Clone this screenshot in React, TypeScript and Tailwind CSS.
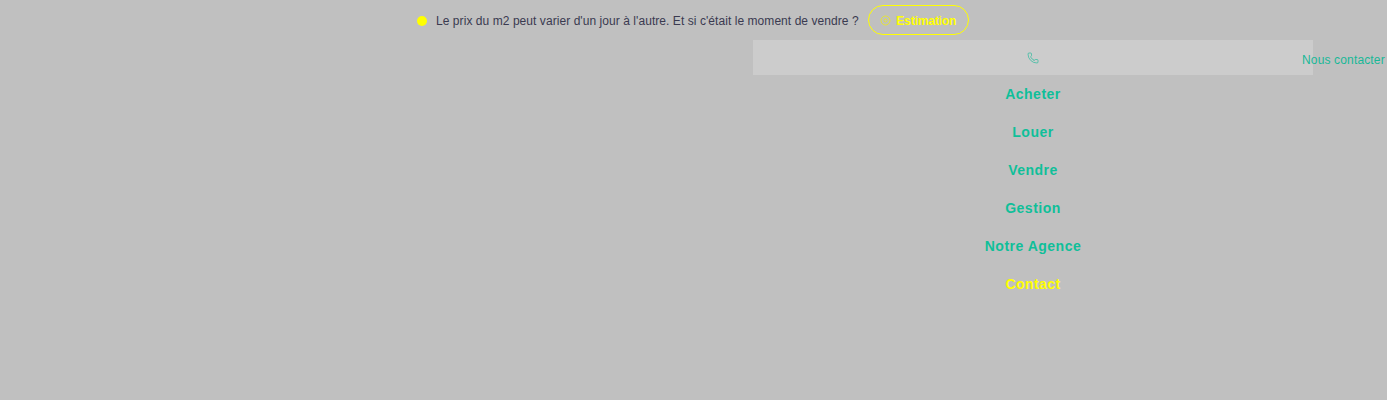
import React from "react";
import { Phone } from "lucide-react";

const NAV_ITEMS = ["Acheter", "Louer", "Vendre", "Gestion", "Notre Agence"];

export default function App() {
  return (
    <div className="h-[400px] w-[1387px] overflow-hidden bg-[#c0c0c0] font-['Liberation_Sans',Arial,sans-serif]">
      <div className="flex h-10 items-center pl-[417px]">
        <span className="mt-[1px] h-2.5 w-2.5 rounded-full bg-[#ffff00]" />
        <p className="ml-[9px] mt-[1px] whitespace-nowrap text-xs tracking-[0.06px] text-[#3a3a50]">
          Le prix du m2 peut varier d'un jour à l'autre. Et si c'était le moment de vendre ?
        </p>
        <a className="ml-[9px] flex h-[30px] w-[101px] items-center justify-center gap-[5px] rounded-full border border-[#ffff00] pt-[1px] text-xs font-bold tracking-[-0.15px] text-[#ffff00]">
          <svg className="shrink-0" width="11" height="11" viewBox="0 0 11 11" fill="none" stroke="#e6e632" strokeWidth="1">
            <circle cx="5.5" cy="5.5" r="4.5" />
            <circle cx="5.5" cy="5.5" r="1.5" />
          </svg>
          Estimation
        </a>
      </div>

      <div className="ml-[753px] w-[560px]">
        <div className="flex h-[35px] items-center bg-[#cccccc] pl-[274px] text-[#17b897]">
          <Phone className="mt-[1px] h-3 w-3 shrink-0" strokeWidth={1.25} />
          <span className="ml-[263px] mt-[4px] whitespace-nowrap text-xs tracking-[0.15px]">Nous contacter</span>
        </div>

        <nav className="flex flex-col items-center">
          {NAV_ITEMS.map((item) => (
            <a key={item} className="flex h-[38px] items-center text-sm font-bold tracking-[0.5px] text-[#0fbf99]">
              {item}
            </a>
          ))}
          <a className="flex h-[38px] items-center text-sm font-bold tracking-[0.4px] text-[#ffff00]">Contact</a>
        </nav>
      </div>
    </div>
  );
}
